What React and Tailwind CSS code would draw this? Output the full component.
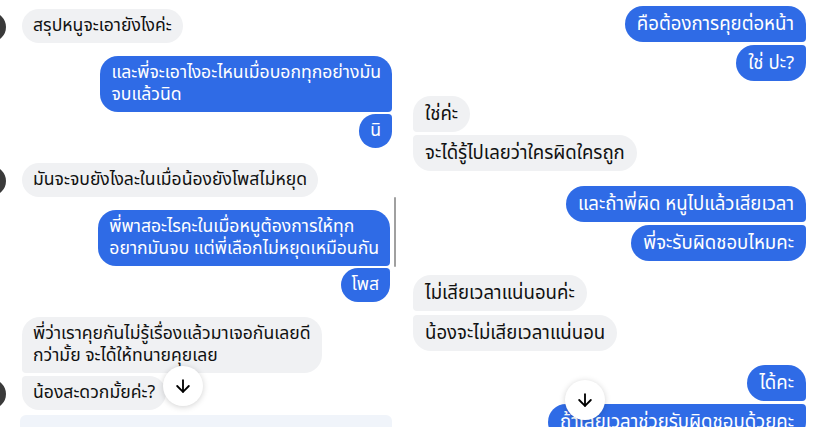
import { ArrowDown } from 'lucide-react'

const FONT = { fontFamily: '"Noto Sans Thai", "Noto Sans", "DejaVu Sans", sans-serif' }

function Bubble({ text, mine, round, big, className = '' }) {
  const color = mine ? 'bg-[#2f6be6] text-white' : 'bg-[#f0f1f3] text-[#111]'
  const size = big ? 'text-[18.6px] leading-[24px] py-[6px] px-3' : 'text-[17.6px] leading-[22px] py-[6px] px-[11px]'
  return (
    <div className={`${color} ${size} ${round} ${className}`}>
      {text.map((line, i) => (
        <div key={i} className="whitespace-nowrap">{line}</div>
      ))}
    </div>
  )
}

function Avatar() {
  return <div className="absolute -left-[46px] bottom-[1px] w-[30px] h-[30px] rounded-full bg-[#3a3a3a]" />
}

function ScrollButton({ className }) {
  return (
    <div className={`absolute w-[40px] h-[40px] rounded-full bg-white shadow-[0_1px_6px_rgba(0,0,0,0.18)] flex items-center justify-center ${className}`}>
      <ArrowDown size={20} strokeWidth={2.2} className="text-black" />
    </div>
  )
}

export default function App() {
  return (
    <div className="w-[816px] h-[427px] bg-white overflow-hidden flex gap-2" style={FONT}>
      {/* left chat */}
      <div className="relative w-[400px] flex flex-col pl-[22px] pr-[8px]">
        <div className="relative self-start mt-[9px]">
          <Avatar />
          <Bubble text={['สรุปหนูจะเอายังไงค่ะ']} round="rounded-[18px]" />
        </div>
        <Bubble
          mine
          className="self-end mt-[13px]"
          text={['และพี่จะเอาไงอะไหนเมื่อบอกทุกอย่างมัน', 'จบแล้วนิด']}
          round="rounded-[18px] rounded-br-[4px]"
        />
        <Bubble mine className="self-end mt-[2px]" text={['นิ']} round="rounded-[18px] rounded-tr-[4px]" />

        <div className="relative self-start mt-[15px]">
          <Avatar />
          <Bubble text={['มันจะจบยังไงละในเมื่อน้องยังโพสไม่หยุด']} round="rounded-[18px]" />
        </div>
        <div className="absolute right-[4px] top-[197px] w-[2px] h-[70px] bg-[#a0a0a0] rounded" />
        <Bubble
          mine
          className="self-end mt-[13px] mr-[2px]"
          text={['พี่พาสอะไรคะในเมื่อหนูต้องการให้ทุก', 'อยากมันจบ แต่พี่เลือกไม่หยุดเหมือนกัน']}
          round="rounded-[18px] rounded-br-[4px]"
        />
        <Bubble mine className="self-end mt-[2px] mr-[2px]" text={['โพส']} round="rounded-[18px] rounded-tr-[4px]" />

        <Bubble
          className="self-start mt-[15px]"
          text={['พี่ว่าเราคุยกันไม่รู้เรื่องแล้วมาเจอกันเลยดี', 'กว่ามั้ย จะได้ให้ทนายคุยเลย']}
          round="rounded-[18px] rounded-bl-[4px]"
        />
        <div className="relative self-start mt-[3px]">
          <Avatar />
          <Bubble text={['น้องสะดวกมั้ยค่ะ?']} round="rounded-[18px] rounded-tl-[4px]" />
        </div>
        <div className="mt-[5px] -ml-[2px] h-[20px] bg-[#f0f4fa] rounded-t-[6px]" />
        <ScrollButton className="left-[163px] top-[366px]" />
      </div>

      {/* right chat */}
      <div className="relative flex-1 flex flex-col pl-[5px] pr-[10px]">
        <Bubble mine big className="self-end mt-[6px]" text={['คือต้องการคุยต่อหน้า']} round="rounded-[18px] rounded-br-[4px]" />
        <Bubble mine big className="self-end mt-[3px]" text={['ใช่ ปะ?']} round="rounded-[18px] rounded-tr-[4px]" />
        <Bubble big className="self-start mt-[15px]" text={['ใช่ค่ะ']} round="rounded-[18px] rounded-bl-[4px]" />
        <Bubble big className="self-start mt-[3px]" text={['จะได้รู้ไปเลยว่าใครผิดใครถูก']} round="rounded-[18px] rounded-tl-[4px]" />
        <Bubble mine big className="self-end mt-[15px]" text={['และถ้าพี่ผิด หนูไปแล้วเสียเวลา']} round="rounded-[18px] rounded-br-[4px]" />
        <Bubble mine big className="self-end mt-[3px]" text={['พี่จะรับผิดชอบไหมคะ']} round="rounded-[18px] rounded-tr-[4px]" />
        <Bubble big className="self-start mt-[14px]" text={['ไม่เสียเวลาแน่นอนค่ะ']} round="rounded-[18px] rounded-bl-[4px]" />
        <Bubble big className="self-start mt-[4px]" text={['น้องจะไม่เสียเวลาแน่นอน']} round="rounded-[18px] rounded-tl-[4px]" />
        <Bubble mine big className="self-end mt-[14px]" text={['ได้คะ']} round="rounded-[18px] rounded-br-[4px]" />
        <Bubble mine big className="self-end mt-[3px]" text={['ถ้าเสียเวลาช่วยรับผิดชอบด้วยคะ']} round="rounded-[18px] rounded-tr-[4px]" />
        <ScrollButton className="left-[157px] top-[380px]" />
      </div>
    </div>
  )
}
